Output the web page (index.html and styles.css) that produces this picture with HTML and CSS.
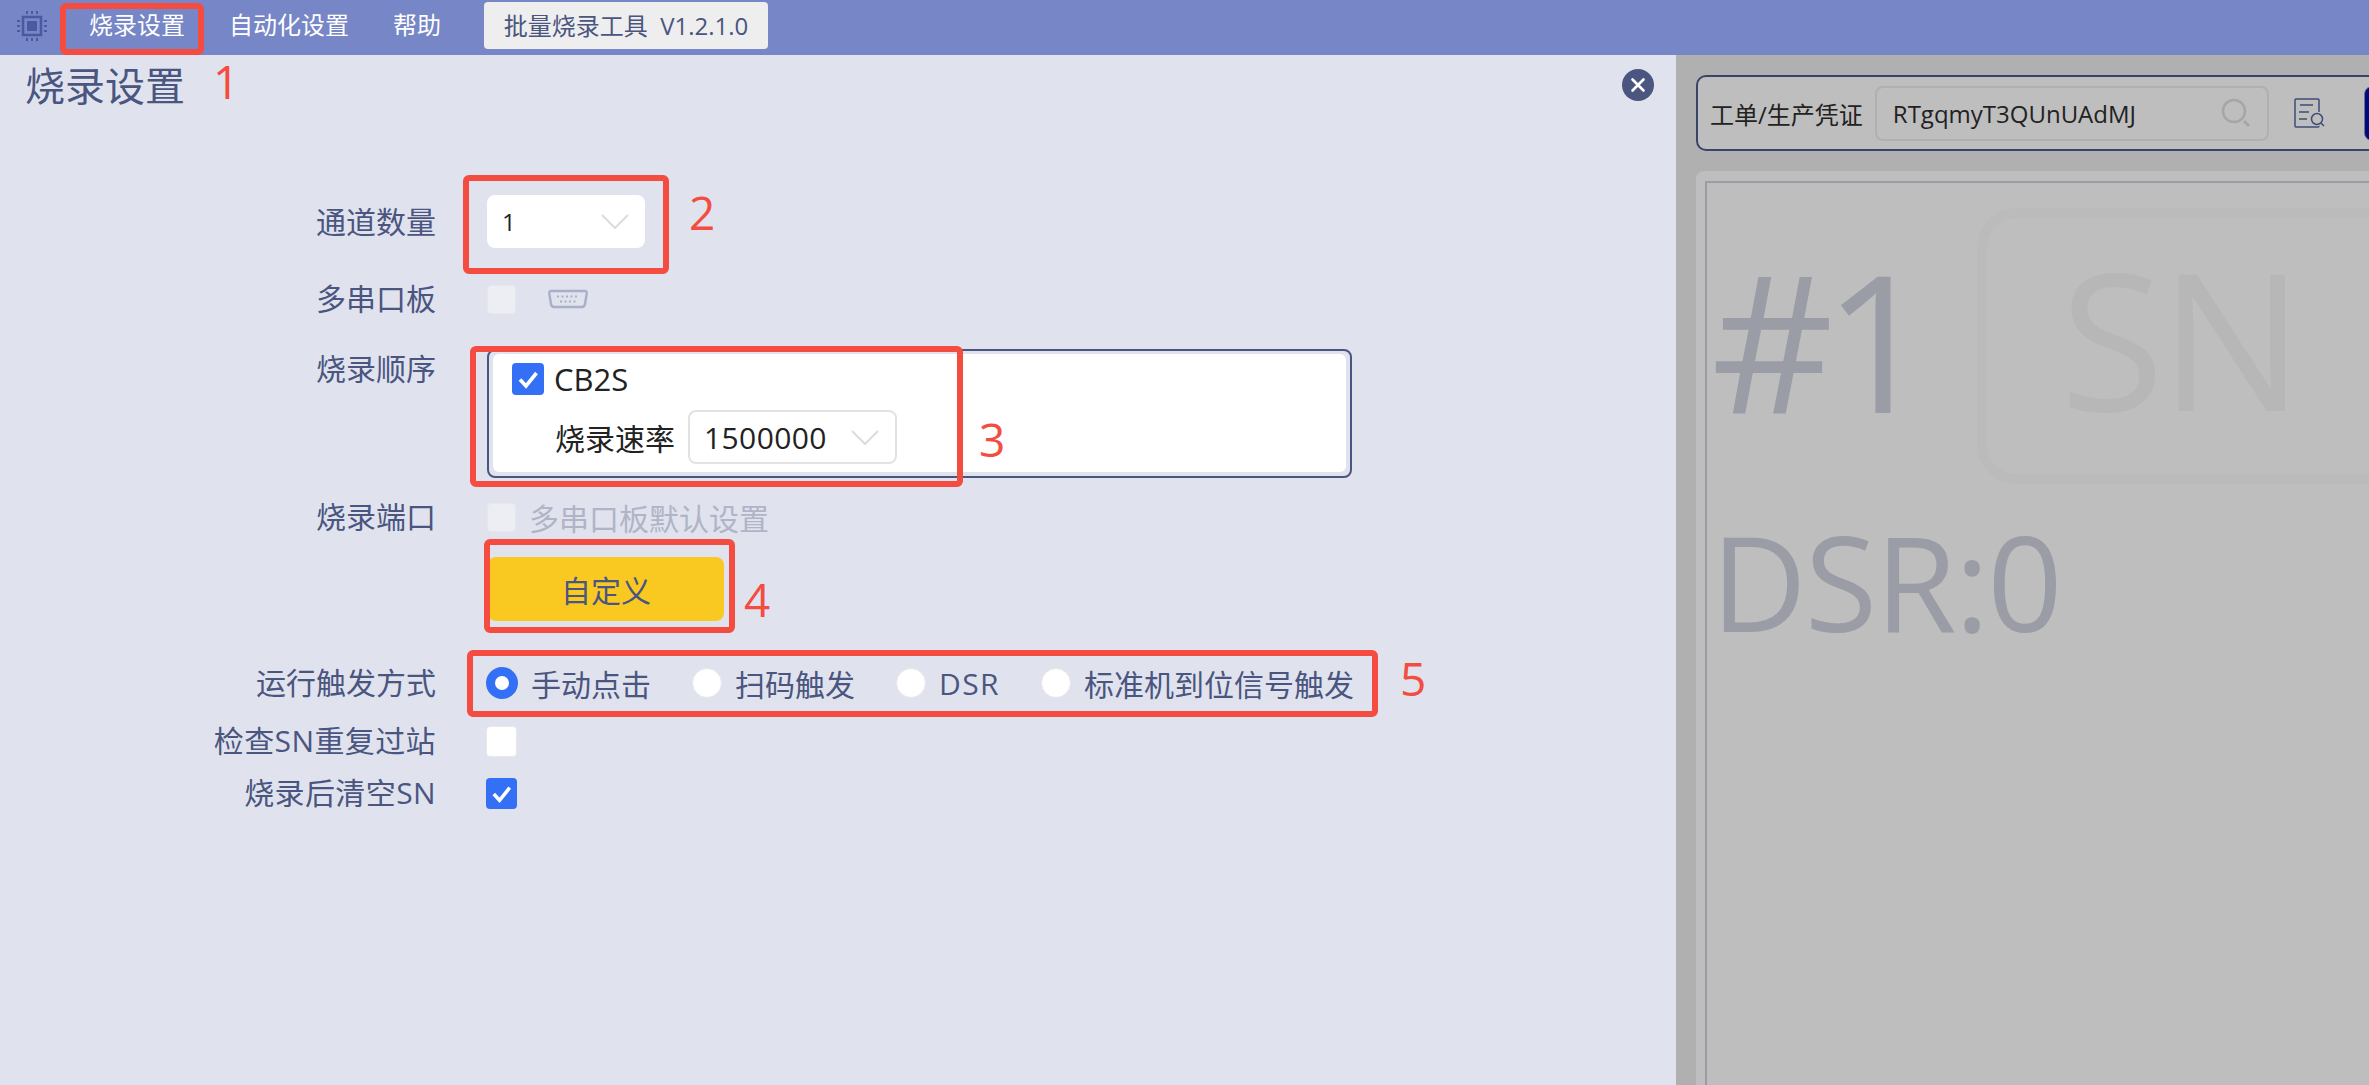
FILE: index.html
```html
<!DOCTYPE html>
<html lang="zh-CN">

<head>
    <meta charset="UTF-8">
    <title>批量烧录工具</title>
    <link rel="stylesheet" href="styles.css">
</head>

<body>
    <div class="app">
        <!-- Top bar -->
        <div class="topbar">
            <svg class="chip" viewBox="0 0 30 30">
                <rect x="6" y="6" width="18" height="18" fill="none" stroke="#4a5aa0" stroke-width="2.5"/>
                <rect x="10" y="10" width="10" height="10" fill="#4a5aa0"/>
                <path d="M10 0v3M15 0v3M20 0v3M10 27v3M15 27v3M20 27v3M0 10h3M0 15h3M0 20h3M27 10h3M27 15h3M27 20h3" stroke="#4a5aa0" stroke-width="2"/>
            </svg>
            <a class="nav-item nav-first">烧录设置</a>
            <a class="nav-item">自动化设置</a>
            <a class="nav-item">帮助</a>
            <div class="version">批量烧录工具&nbsp; V1.2.1.0</div>
        </div>

        <div class="main">
            <!-- Settings panel -->
            <div class="panel">
                <h1 class="panel-title">烧录设置</h1>
                <div class="close">
                    <svg viewBox="0 0 32 32" width="32" height="32">
                        <path d="M10.5 10.5l11 11M21.5 10.5l-11 11" stroke="#fff" stroke-width="2.6" stroke-linecap="round"/>
                    </svg>
                </div>

                <div class="form">
                    <div class="row row-channels">
                        <label class="row-label">通道数量</label>
                        <div class="select select-plain">
                            <span class="select-small">1</span>
                            <svg class="chevron" viewBox="0 0 28 15"><path d="M1 1l13 13L27 1" fill="none" stroke="#dcdcdc" stroke-width="2"/></svg>
                        </div>
                    </div>

                    <div class="row row-serial">
                        <label class="row-label">多串口板</label>
                        <span class="check check-disabled"></span>
                        <svg class="serial" viewBox="0 0 40 20">
                            <path d="M3 2h34q2 0 1.700 2.500L37 15q-.5 3-3 3H6q-2.500 0-3-3L1.300 4.500Q1 2 3 2z" fill="none" stroke="#a9afc8" stroke-width="2.400"/>
                            <path d="M9 7.500h22M12 12.500h16" stroke="#a9afc8" stroke-width="2" stroke-dasharray="2 2.500"/>
                        </svg>
                    </div>

                    <div class="row row-order">
                        <label class="row-label">烧录顺序</label>
                        <div class="order-box">
                            <div class="order-inner">
                                <div class="order-chip">
                                    <span class="check check-on check-large">
                                        <svg viewBox="0 0 32 32"><path d="M8 16.500l6 6.500L24.500 10" fill="none" stroke="#fff" stroke-width="3.600"/></svg>
                                    </span>
                                    <span class="chip-name">CB2S</span>
                                </div>
                                <div class="order-rate">
                                    <span class="rate-label">烧录速率</span>
                                    <div class="select select-rate">
                                        <span>1500000</span>
                                        <svg class="chevron" viewBox="0 0 28 15"><path d="M1 1l13 13L27 1" fill="none" stroke="#dcdcdc" stroke-width="2"/></svg>
                                    </div>
                                </div>
                            </div>
                        </div>
                    </div>

                    <div class="row row-port">
                        <label class="row-label">烧录端口</label>
                        <span class="check check-disabled"></span>
                        <span class="muted">多串口板默认设置</span>
                    </div>

                    <div class="row row-custom">
                        <span class="row-label"></span>
                        <button class="btn-yellow">自定义</button>
                    </div>

                    <div class="row row-trigger">
                        <label class="row-label">运行触发方式</label>
                        <div class="radios">
                            <span class="radio radio-on"></span><span class="radio-text">手动点击</span>
                            <span class="radio"></span><span class="radio-text">扫码触发</span>
                            <span class="radio"></span><span class="radio-text radio-text-latin">DSR</span>
                            <span class="radio"></span><span class="radio-text">标准机到位信号触发</span>
                        </div>
                    </div>

                    <div class="row row-repeat">
                        <label class="row-label row-label-latin">检查SN重复过站</label>
                        <span class="check"></span>
                    </div>

                    <div class="row row-clear">
                        <label class="row-label row-label-latin">烧录后清空SN</label>
                        <span class="check check-on">
                            <svg viewBox="0 0 32 32"><path d="M8 16.500l6 6.500L24.500 10" fill="none" stroke="#fff" stroke-width="3.600"/></svg>
                        </span>
                    </div>
                </div>
            </div>

            <!-- Dimmed work area behind the panel -->
            <div class="work">
                <div class="toolbar">
                    <span class="toolbar-label">工单/生产凭证</span>
                    <div class="token">
                        <span>RTgqmyT3QUnUAdMJ</span>
                        <svg class="token-search" viewBox="0 0 30 30">
                            <circle cx="13" cy="13" r="11" fill="none" stroke="#a6a6a6" stroke-width="2.500"/>
                            <path d="M23 23l5 5" stroke="#a6a6a6" stroke-width="3"/>
                        </svg>
                    </div>
                    <svg class="doc-icon" viewBox="0 0 32 30">
                        <path d="M26 14V2q0-1-1-1H3Q2 1 2 2v26q0 1 1 1h22q1 0 1-1" fill="none" stroke="#3f4c78" stroke-width="1.500"/>
                        <path d="M7 7h13M6 14h10M6 21h8" stroke="#3f4c78" stroke-width="1.500"/>
                        <circle cx="24" cy="21" r="5.500" fill="none" stroke="#3f4c78" stroke-width="1.500"/>
                        <path d="M28 25l3 3" stroke="#3f4c78" stroke-width="1.500"/>
                    </svg>
                    <span class="toolbar-btn"></span>
                </div>
                <div class="card">
                    <div class="card-inner">
                        <div class="card-top">
                            <span class="channel">#1</span>
                            <div class="sn-box">SN</div>
                        </div>
                        <div class="dsr">DSR:0</div>
                    </div>
                </div>
            </div>
        </div>

        <!-- Red annotations drawn over the screenshot -->
        <span class="mark mark-1"></span>
        <span class="mark mark-2"></span>
        <span class="mark mark-3"></span>
        <span class="mark mark-4"></span>
        <span class="mark mark-5"></span>
        <span class="num num-1">1</span>
        <span class="num num-2">2</span>
        <span class="num num-3">3</span>
        <span class="num num-4">4</span>
        <span class="num num-5">5</span>
    </div>
</body>

</html>
```

FILE: styles.css
```css
* {
    box-sizing: border-box;
}

body {
    margin: 0;
    font-family: "Open Sans", "Noto Sans CJK SC", sans-serif;
    color: #4a5580;
    background: #e0e3ee;
}

.app {
    position: relative;
    width: 2369px;
    height: 1085px;
    overflow: hidden;
    display: flex;
    flex-direction: column;
}

/* top bar */
.topbar {
    height: 55px;
    flex: none;
    display: flex;
    align-items: flex-start;
    padding-left: 17px;
    background: #7686c6;
}

.chip {
    width: 30px;
    height: 30px;
    margin-top: 11px;
}

.nav-item {
    margin-left: 44px;
    font-size: 24px;
    line-height: 50px;
    color: #fff;
}

.nav-first {
    margin-left: 42px;
}

.version {
    width: 284px;
    height: 47px;
    margin: 2px 0 0 43px;
    border-radius: 4px;
    background: #eeeeee;
    font-size: 24px;
    line-height: 47px;
    text-align: center;
}

.main {
    flex: 1;
    display: flex;
    min-height: 0;
}

/* settings panel */
.panel {
    position: relative;
    width: 1676px;
    flex: none;
    padding: 3px 0 0 25px;
    background: #e0e3ee;
}

.panel-title {
    margin: 0;
    font-size: 40px;
    font-weight: 400;
    line-height: 56px;
}

.close {
    position: absolute;
    top: 14px;
    right: 22px;
    width: 32px;
    height: 32px;
    border-radius: 50%;
    background: #4a5580;
}

.form {
    margin: 81px 0 0 -25px;
}

.row {
    display: flex;
    align-items: center;
}

.row-label {
    width: 436px;
    margin-right: 50px;
    flex: none;
    font-size: 30px;
    line-height: 40px;
    text-align: right;
}

.row-label-latin {
    letter-spacing: .4px;
}

.row-channels {
    height: 53px;
}

.row-serial {
    height: 30px;
    margin-top: 36px;
}

.row-order {
    align-items: flex-start;
    margin-top: 35px;
}

.row-port {
    height: 30px;
    margin-top: 24px;
}

.row-custom {
    margin-top: 25px;
}

.row-trigger {
    height: 40px;
    margin-top: 42px;
}

.row-repeat {
    height: 32px;
    margin-top: 22px;
}

.row-clear {
    height: 32px;
    margin-top: 20px;
}

.select {
    display: flex;
    align-items: center;
    justify-content: space-between;
    border-radius: 8px;
    background: #fff;
    color: #222;
}

.select-plain {
    width: 158px;
    height: 53px;
    margin-left: 1px;
    padding: 0 16px 0 15px;
}

.select-small {
    font-size: 24px;
}

.select-rate {
    width: 209px;
    height: 54px;
    padding: 0 16px 0 14px;
    border: 2px solid #e2e2e2;
    font-size: 30px;
    letter-spacing: .4px;
}

.chevron {
    width: 28px;
    height: 15px;
}

.check {
    display: block;
    width: 31px;
    height: 31px;
    flex: none;
    border: 1px solid #e8e8ec;
    border-radius: 4px;
    background: #fff;
}

.check svg {
    display: block;
    width: 100%;
    height: 100%;
}

.check-disabled {
    width: 29px;
    height: 29px;
    margin-left: 1px;
    background: #eceef3;
}

.check-on {
    border: none;
    background: #3370f5;
}

.check-large {
    width: 32px;
    height: 32px;
}

.serial {
    width: 40px;
    height: 20px;
    margin-left: 32px;
}

.order-box {
    width: 865px;
    height: 129px;
    margin-left: 1px;
    padding: 3px 4px 4px 4px;
    border: 2px solid #4a5580;
    border-radius: 8px;
}

.order-inner {
    height: 100%;
    padding: 9px 0 0 19px;
    border-radius: 6px;
    background: #fff;
}

.order-chip {
    display: flex;
    align-items: center;
    height: 32px;
    color: #222;
}

.chip-name {
    margin-left: 10px;
    font-size: 31px;
}

.order-rate {
    display: flex;
    align-items: center;
    margin: 15px 0 0 43px;
}

.rate-label {
    margin-right: 13px;
    font-size: 30px;
    color: #222;
}

.muted {
    margin-left: 13px;
    font-size: 30px;
    color: #b0b4c6;
}

.btn-yellow {
    width: 236px;
    height: 64px;
    margin-left: 2px;
    border: none;
    border-radius: 8px;
    background: #f9c922;
    color: #4a5580;
    font: inherit;
    font-size: 30px;
}

.radios {
    display: flex;
    align-items: center;
}

.radio {
    display: block;
    width: 30px;
    height: 30px;
    flex: none;
    border: 1px solid #e8e8ec;
    border-radius: 50%;
    background: #fff;
}

.radio-on {
    width: 32px;
    height: 32px;
    border: 9px solid #3370f5;
}

.radio-text {
    margin: 0 41px 0 13px;
    font-size: 30px;
}

.radio-text-latin {
    letter-spacing: 1.400px;
}

/* dimmed work area */
.work {
    flex: 1;
    min-width: 0;
    padding: 20px 0 0 20px;
    background: #b0b0b0;
    overflow: hidden;
}

.toolbar {
    display: flex;
    align-items: center;
    width: 720px;
    height: 76px;
    padding-left: 12px;
    border: 2px solid #3a4468;
    border-radius: 10px;
    background: #bebebe;
    color: #222;
}

.toolbar-label {
    font-size: 24px;
    white-space: nowrap;
}

.token {
    display: flex;
    align-items: center;
    justify-content: space-between;
    width: 394px;
    height: 55px;
    margin-left: 12px;
    padding: 0 16px;
    flex: none;
    border: 2px solid #b0b0b0;
    border-radius: 8px;
    font-size: 24px;
}

.token-search {
    width: 30px;
    height: 30px;
}

.doc-icon {
    width: 32px;
    height: 30px;
    margin-left: 24px;
    flex: none;
}

.toolbar-btn {
    width: 60px;
    height: 55px;
    margin-left: 39px;
    flex: none;
    border: 1px solid #6a7098;
    border-radius: 8px;
    background: #000a78;
}

.card {
    width: 720px;
    height: 930px;
    margin-top: 20px;
    padding: 10px 0 0 9px;
    border-radius: 8px 0 0 0;
    background: #bebebe;
}

.card-inner {
    height: 100%;
    padding: 25px 0 0 4px;
    border-top: 2px solid #9a9da6;
    border-left: 2px solid #9a9da6;
}

.card-top {
    display: flex;
    align-items: center;
    height: 276px;
}

.channel {
    width: 266px;
    height: 276px;
    flex: none;
    font-size: 190px;
    line-height: 264px;
    letter-spacing: -10px;
    color: #9a9da6;
}

.sn-box {
    width: 500px;
    height: 276px;
    flex: none;
    padding-left: 73px;
    border: 10px solid #bbbbbb;
    border-radius: 40px;
    font-size: 190px;
    line-height: 240px;
    letter-spacing: -4px;
    color: #b7b7b7;
}

.dsr {
    margin-top: 22px;
    font-size: 132px;
    line-height: 150px;
    letter-spacing: -2px;
    color: #9a9da6;
}

/* annotations */
.mark {
    position: absolute;
    border: 6px solid #f44c40;
    border-radius: 6px;
}

.mark-1 {
    left: 60px;
    top: 3px;
    width: 144px;
    height: 52px;
}

.mark-2 {
    left: 463px;
    top: 175px;
    width: 206px;
    height: 99px;
}

.mark-3 {
    left: 470px;
    top: 346px;
    width: 493px;
    height: 141px;
}

.mark-4 {
    left: 484px;
    top: 539px;
    width: 251px;
    height: 94px;
}

.mark-5 {
    left: 467px;
    top: 650px;
    width: 911px;
    height: 67px;
}

.num {
    position: absolute;
    font-size: 46px;
    line-height: 46px;
    color: #f44c40;
}

.num-1 {
    left: 213px;
    top: 58px;
}

.num-2 {
    left: 689px;
    top: 189px;
}

.num-3 {
    left: 979px;
    top: 416px;
}

.num-4 {
    left: 744px;
    top: 576px;
}

.num-5 {
    left: 1400px;
    top: 655px;
}
```
